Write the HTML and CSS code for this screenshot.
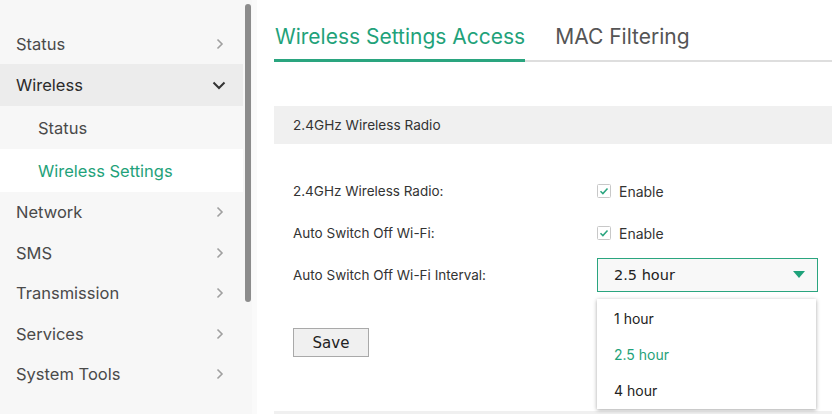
FILE: index.html
```html
<!DOCTYPE html>
<html lang="en">
<head>
<meta charset="utf-8">
<title>Wireless Settings</title>
<link rel="stylesheet" href="styles.css">
</head>
<body>
<aside class="sidebar">
  <nav class="menu">
    <div class="item first"><span>Status</span><svg class="chev" viewBox="0 0 8 12"><path d="M1.5 1.5 6 6 1.5 10.5"/></svg></div>
    <div class="item open"><span>Wireless</span><svg class="chev-down" viewBox="0 0 14 9"><path d="M1.5 1.5 7 7 12.5 1.5"/></svg></div>
    <div class="sub">Status</div>
    <div class="sub active">Wireless Settings</div>
    <div class="item"><span>Network</span><svg class="chev" viewBox="0 0 8 12"><path d="M1.5 1.5 6 6 1.5 10.5"/></svg></div>
    <div class="item"><span>SMS</span><svg class="chev" viewBox="0 0 8 12"><path d="M1.5 1.5 6 6 1.5 10.5"/></svg></div>
    <div class="item"><span>Transmission</span><svg class="chev" viewBox="0 0 8 12"><path d="M1.5 1.5 6 6 1.5 10.5"/></svg></div>
    <div class="item"><span>Services</span><svg class="chev" viewBox="0 0 8 12"><path d="M1.5 1.5 6 6 1.5 10.5"/></svg></div>
    <div class="item"><span>System Tools</span><svg class="chev" viewBox="0 0 8 12"><path d="M1.5 1.5 6 6 1.5 10.5"/></svg></div>
  </nav>
  <div class="track"><div class="thumb"></div></div>
</aside>
<main class="content">
  <div class="tabs">
    <div class="tab active">Wireless Settings Access</div>
    <div class="tab">MAC Filtering</div>
  </div>
  <div class="section-head">2.4GHz Wireless Radio</div>
  <div class="form">
    <div class="row">
      <div class="label">2.4GHz Wireless Radio:</div>
      <div class="field"><svg class="check" viewBox="0 0 14 14"><rect x="0.5" y="0.5" width="13" height="13" rx="1"/><path d="M3.5 7.2 5.9 9.6 10.5 4.4"/></svg><span>Enable</span></div>
    </div>
    <div class="row">
      <div class="label">Auto Switch Off Wi-Fi:</div>
      <div class="field"><svg class="check" viewBox="0 0 14 14"><rect x="0.5" y="0.5" width="13" height="13" rx="1"/><path d="M3.5 7.2 5.9 9.6 10.5 4.4"/></svg><span>Enable</span></div>
    </div>
    <div class="row">
      <div class="label">Auto Switch Off Wi-Fi Interval:</div>
      <div class="field">
        <div class="select">
          <span class="select-value">2.5 hour</span>
          <svg class="caret" viewBox="0 0 12 8"><path d="M0 0H12L6 7Z"/></svg>
          <ul class="dropdown">
            <li>1 hour</li>
            <li class="selected">2.5 hour</li>
            <li>4 hour</li>
          </ul>
        </div>
      </div>
    </div>
    <div class="actions"><button class="btn">Save</button></div>
  </div>
  <div class="section-head next"></div>
</main>
</body>
</html>
```
FILE: styles.css
```css
* { box-sizing: border-box; }
html, body { margin: 0; padding: 0; }
body {
  width: 832px;
  height: 414px;
  overflow: hidden;
  display: flex;
  background: #fff;
  font-family: Inter, "Noto Sans", sans-serif;
  color: #333;
}
.sidebar {
  width: 257px;
  flex: none;
  display: flex;
  background: #f7f7f7;
}
.menu {
  width: 243px;
  padding-top: 23px;
}
.item {
  height: 40.5px;
  display: flex;
  align-items: center;
  justify-content: space-between;
  padding: 0 19px 0 16px;
  font-size: 16.5px;
  color: #4a4a4a;
}
.item.first { height: 41px; }
.item.open {
  height: 42px;
  background: #ececec;
  color: #2b2b2b;
  padding-right: 17px;
}
.sub {
  height: 43px;
  display: flex;
  align-items: center;
  padding-left: 38px;
  font-size: 16.5px;
  color: #4a4a4a;
}
.sub.active {
  background: #fff;
  color: #1fa27a;
}
.chev {
  width: 8px;
  height: 12px;
  fill: none;
  stroke: #a0a0a0;
  stroke-width: 1.6;
}
.chev-down {
  width: 14px;
  height: 9px;
  fill: none;
  stroke: #333;
  stroke-width: 2;
}
.track {
  width: 14px;
  padding: 4px 0 0 2px;
  background: linear-gradient(to right, #f7f7f7 0 9px, #fafafa 9px);
}
.thumb {
  width: 6px;
  height: 298px;
  border-radius: 3px;
  background: #8c8c8c;
}
.content {
  flex: 1;
  height: 414px;
  overflow: hidden;
  padding-left: 17px;
  display: flex;
  flex-direction: column;
}
.content > * { flex: none; }
.tabs {
  height: 62px;
  display: flex;
  align-items: flex-end;
  gap: 29px;
  border-bottom: 2px solid #dedede;
}
.tab {
  font-size: 21px;
  color: #555;
  padding: 0 0 10px 1px;
  line-height: 26px;
}
.tab.active {
  color: #1fa27a;
  border-bottom: 3px solid #2aa57f;
  margin-bottom: -2px;
  padding-bottom: 9px;
}
.section-head {
  margin-top: 44px;
  height: 38px;
  background: #f0f0f0;
  display: flex;
  align-items: center;
  padding-left: 19px;
  font-size: 13.6px;
  color: #333;
}
.form {
  padding-top: 26px;
  padding-left: 19px;
}
.row {
  height: 42px;
  display: flex;
  align-items: center;
}
.label {
  width: 304px;
  font-size: 13.5px;
  color: #333;
}
.field {
  display: flex;
  align-items: center;
  gap: 8px;
  font-size: 14px;
  color: #333;
}
.check {
  width: 14px;
  height: 14px;
}
.check rect { fill: #fff; stroke: #c8c8c8; }
.check path { fill: none; stroke: #2aa57f; stroke-width: 1.5; }
.select {
  position: relative;
  width: 221px;
  height: 34px;
  border: 1px solid #2aa57f;
  background: #f8f8f8;
  display: flex;
  align-items: center;
  justify-content: space-between;
  padding: 0 12px 0 16px;
  font-family: "DejaVu Sans", Verdana, sans-serif;
  font-size: 14.5px;
  color: #222;
}
.caret {
  width: 12px;
  height: 8px;
  fill: #1fa27a;
}
.dropdown {
  position: absolute;
  left: -1px;
  top: 40px;
  width: 219px;
  margin: 0;
  padding: 1px 0;
  list-style: none;
  background: #fff;
  box-shadow: 0 1px 4px rgba(0, 0, 0, 0.35);
  font-family: Inter, "Noto Sans", sans-serif;
  font-size: 14px;
  color: #222;
  z-index: 2;
}
.dropdown li {
  height: 36px;
  display: flex;
  align-items: center;
  padding-left: 17px;
}
.dropdown li.selected { color: #1fa27a; }
.actions {
  padding-top: 32px;
}
.btn {
  width: 76px;
  height: 29px;
  background: #f0f0f0;
  border: 1px solid #a9a9a9;
  border-radius: 0;
  font-family: "DejaVu Sans", Verdana, sans-serif;
  font-size: 15px;
  color: #222;
  padding: 0;
}
.section-head.next {
  margin-top: 54px;
  height: 3px;
}
```
